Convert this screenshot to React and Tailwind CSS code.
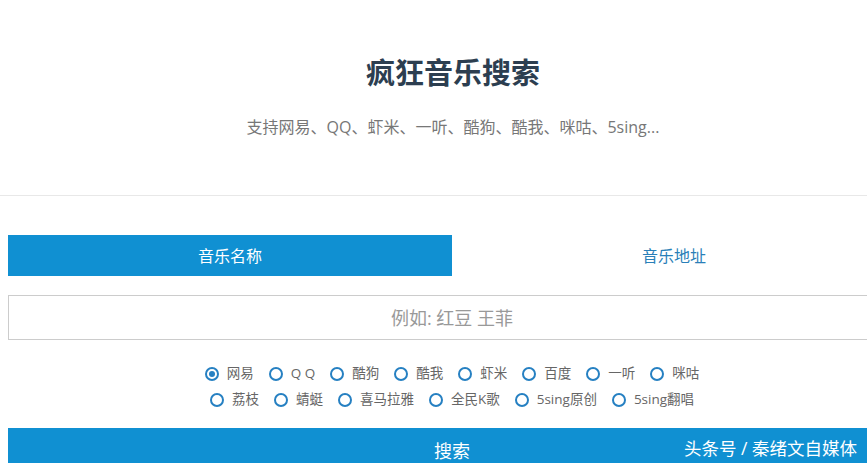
const row1 = ['网易', 'Q Q', '酷狗', '酷我', '虾米', '百度', '一听', '咪咕'];
const row2 = ['荔枝', '蜻蜓', '喜马拉雅', '全民K歌', '5sing原创', '5sing翻唱'];

function Radio({ label, checked }) {
  return (
    <label className="flex items-center gap-[8px] text-[13.5px] text-[#666] leading-none">
      <span className="w-[14px] h-[14px] rounded-full border-2 border-[#2680c2] flex items-center justify-center">
        {checked && <span className="w-[6px] h-[6px] rounded-full bg-[#2680c2]" />}
      </span>
      {label}
    </label>
  );
}

export default function App() {
  return (
    <div
      className="w-[867px] h-[463px] overflow-hidden bg-white relative"
      style={{ fontFamily: '"Open Sans", "Noto Sans CJK SC", sans-serif' }}
    >
      <div className="pt-[53px] h-[196px] border-b border-[#e8e8e8] w-[867px]">
        <div className="w-[906px] flex flex-col items-center">
          <h1 className="text-[29px] font-bold text-[#2c3e50] leading-[40px]">疯狂音乐搜索</h1>
          <p className="mt-[24px] text-[16px] text-[#777] leading-5">
            支持网易、QQ、虾米、一听、酷狗、酷我、咪咕、5sing...
          </p>
        </div>
      </div>

      <div className="w-[888px] ml-[8px] pt-[39px]">
        <div className="flex h-[41px]">
          <div className="flex-1 bg-[#1090d2] text-white text-[16px] flex items-center justify-center">
            音乐名称
          </div>
          <div className="flex-1 text-[#2a7fb8] text-[16px] flex items-center justify-center">
            音乐地址
          </div>
        </div>

        <input
          placeholder="例如: 红豆 王菲"
          className="mt-[19px] w-full h-[45px] border border-[#ccc] text-center text-[18px] placeholder:text-[#999] outline-none"
        />

        <div className="mt-[27px] flex flex-col items-center gap-[12px]">
          <div className="flex gap-[15px]">
            {row1.map((l, i) => (
              <Radio key={l} label={l} checked={i === 0} />
            ))}
          </div>
          <div className="flex gap-[15px]">
            {row2.map((l) => (
              <Radio key={l} label={l} />
            ))}
          </div>
        </div>

        <button className="mt-[21px] w-full h-[45px] bg-[#1090d2] text-white text-[18px] pt-[2px]">
          搜索
        </button>
      </div>

      <div className="absolute right-[10px] bottom-[5px] text-white text-[17.5px] leading-5">
        头条号 / 秦绪文自媒体
      </div>
    </div>
  );
}
